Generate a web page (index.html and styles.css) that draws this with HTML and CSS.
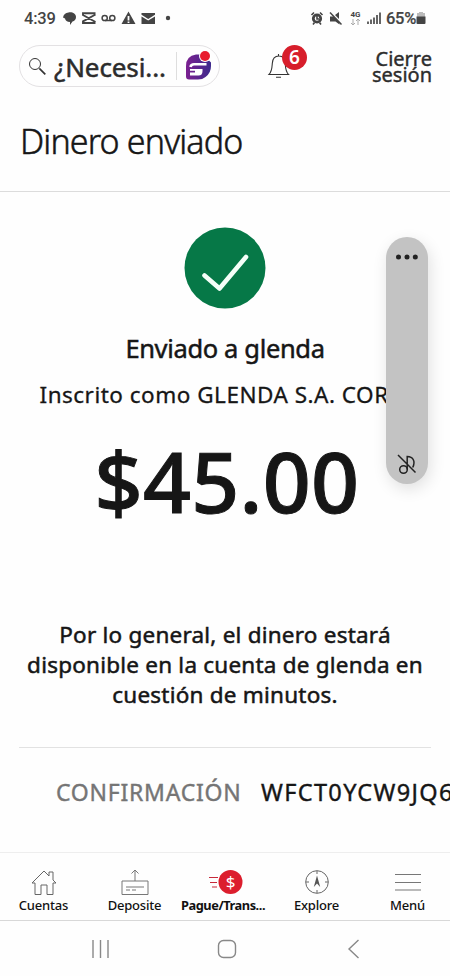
FILE: index.html
```html
<!DOCTYPE html>
<html lang="es">
<head>
<meta charset="utf-8">
<title>Dinero enviado</title>
<link rel="stylesheet" href="styles.css">
</head>
<body>
<div class="status">
  <div class="status-left">
    <span class="clock">4:39</span>
    <svg class="status-icons" width="112" height="16" viewBox="0 0 112 16">
      <g fill="#444">
        <path d="M5.500 2.500c3.500-.8 7.500 1 7.500 4.500 0 2.500-1.500 4-3.500 4.500L7 15v-3C4 12 2.500 10.500 2 8.500L0 7.500C.5 4.500 2.500 3 5.500 2.500z"/>
        <path fill-rule="evenodd" d="M65.500 1.500l7 12.500h-14zM64.600 6v4.500h1.800V6zm0 5.500v1.500h1.800v-1.500z"/>
        <path d="M78.500 3H92v1.800L85.200 9l-6.700-4.200zM78.500 6.500l6.700 4 6.800-4V14H78.500z"/>
        <circle cx="105" cy="8" r="2.200"/>
      </g>
      <g fill="none" stroke="#444">
        <path stroke-width="1.900" d="M32.500 3.300H20v1.700l12.500 7M32.500 13H20v-1.700L32.500 4.500"/>
        <path stroke-width="1.500" d="M42 10.500h7"/>
        <circle cx="41.700" cy="8" r="2.600" stroke-width="1.500"/>
        <circle cx="49.300" cy="8" r="2.600" stroke-width="1.500"/>
      </g>
    </svg>
  </div>
  <div class="status-right">
    <svg width="73" height="18" viewBox="0 0 73 18">
      <g fill="none" stroke="#444">
        <circle cx="7" cy="9.500" r="3.700" stroke-width="2.800"/>
        <path stroke-width="1.600" d="M1.500 6 4 3.500M12.500 6 10 3.500M3 15.500l1.500-2M11 15.500l-1.500-2M7 7v3h2"/>
        <path stroke-width="1.500" d="M20 3.500 31.500 15.500"/>
      </g>
      <path fill="#444" d="M20 7.500h3.500l6 6v2l-4-3H20zM25 6l4-3v7z"/>
      <text class="net" x="40.500" y="8">4G</text>
      <path fill="none" stroke="#aaa" d="M43 10v6M41 14l2 2 2-2M48 16v-6M46 12l2-2 2 2"/>
      <path fill="none" stroke="#555" stroke-width="1.800" d="M58 15v-2.500M61 15v-4.500M64 15V8.500M67 15V6M70 15V3.500"/>
    </svg>
    <span class="percent">65%</span>
    <svg width="10" height="14" viewBox="0 0 10 14"><path fill="#bbb" d="M3 1h4v1h2v5H1V2h2z"/><path fill="#444" d="M.5 5.500h9V12q0 1-1 1h-7q-1 0-1-1z"/></svg>
  </div>
</div>

<header class="top">
  <div class="search">
    <svg width="20" height="20" viewBox="0 0 20 20" fill="none" stroke="#333"><circle cx="7" cy="8" r="5.500"/><path stroke-width="1.700" d="m11.300 12.300 6 6"/></svg>
    <span class="search-text">¿Necesi...</span>
    <span class="search-rule"></span>
    <svg class="fargo" width="28" height="30" viewBox="0 0 28 30">
      <defs><linearGradient id="g" x1="0" x2="1"><stop stop-color="#7b2090"/><stop offset="1" stop-color="#3d2a8c"/></linearGradient></defs>
      <path fill="url(#g)" d="M11 3.500h7l8 8V15q0 7-5.500 11-3 2.500-7.500 2.500H4q-3 0-3-3V15Q1 5 11 3.500z"/>
      <path fill="none" stroke="#fff" stroke-width="2.600" d="M21.500 13.300H9q-3 0-3.500 2.700"/>
      <path fill="#fff" d="M5 18h12.500v2q0 4.500-4 4.500H5v-3h5v-1.700H5z"/>
      <circle cx="20" cy="5" r="6" fill="#fff"/><circle cx="20" cy="5" r="5" fill="#e81c2e"/>
    </svg>
  </div>
  <div class="bell">
    <svg width="24" height="28" viewBox="0 0 24 28" fill="none" stroke="#333"><path stroke-width="1.100" d="M1 22.500c3-3 3-7 3.300-11C4.500 6.500 7.500 4 11 4s6 2.500 6.200 7.500c.3 4 .3 8 3.300 11zM10.500 4V2M8 25.300h5"/></svg>
    <span class="badge">6</span>
  </div>
  <div class="logout">Cierre<br>sesión</div>
</header>

<div class="title"><h1>Dinero enviado</h1></div>

<main>
  <svg class="check" width="82" height="82" viewBox="0 0 82 82"><circle cx="41" cy="41" r="40.500" fill="#067847"/><path fill="none" stroke="#f4fff8" stroke-width="4.600" stroke-linecap="round" stroke-linejoin="round" d="m20.500 48.500 15 13L62 30"/></svg>
  <h2>Enviado a glenda</h2>
  <p class="alias">Inscrito como GLENDA S.A. CORP</p>
  <div class="amount">$45.00</div>
  <p class="note"><span>Por lo general, el dinero estará</span><span>disponible en la cuenta de glenda en</span><span>cuestión de minutos.</span></p>
  <div class="confirm"><span class="label">CONFIRMACIÓN</span><span class="code">WFCT0YCW9JQ6</span></div>
</main>

<nav class="tabs">
  <div class="tab"><svg width="28" height="28" viewBox="0 0 28 28" fill="none" stroke="#666"><path d="M2 15 14 3l5 5V4h4v8l3 3h-3v11.500h-6V17h-6v9.500H5V15z"/></svg><span>Cuentas</span></div>
  <div class="tab"><svg width="28" height="28" viewBox="0 0 28 28" fill="none" stroke="#777"><path d="M1 13h26v13.500H1zM14 13V2M10.500 5.500 14 2l3.500 3.500M5 19h18M5 22h4M11 22h4"/></svg><span>Deposite</span></div>
  <div class="tab active"><svg width="36" height="28" viewBox="0 0 36 28"><path stroke="#c72a3a" d="M4 9.500h9M5 14.500h7M7 19h5"/><circle cx="25.500" cy="14" r="12" fill="#dc1e2d"/><text class="dollar" x="25.500" y="20">$</text></svg><span>Pague/Trans...</span></div>
  <div class="tab"><svg width="28" height="28" viewBox="0 0 28 28" fill="none" stroke="#666"><circle cx="14" cy="14" r="11.300"/><path d="M14 3v3M14 22v3M3 14h3M22 14h3"/><path fill="#555" stroke="none" d="m14 7.500 3.200 11.500-3.200-3.500-3.200 3.500z"/></svg><span>Explore</span></div>
  <div class="tab"><svg width="28" height="28" viewBox="0 0 28 28" stroke="#777" stroke-width="1.100"><path d="M1 6.500h26M1 14.500h26M1 22h26"/></svg><span>Menú</span></div>
</nav>
<div class="system">
  <svg width="20" height="20" viewBox="0 0 20 20" stroke="#888" stroke-width="1.400"><path d="M2 1v18M9.500 1v18M17 1v18"/></svg>
  <svg width="20" height="20" viewBox="0 0 20 20" fill="none" stroke="#888" stroke-width="1.400"><rect x="1.500" y="1.500" width="17" height="17" rx="5"/></svg>
  <svg width="20" height="20" viewBox="0 0 20 20" fill="none" stroke="#888" stroke-width="1.400"><path d="M15.500 1 6 10l9.500 9"/></svg>
</div>

<div class="volume">
  <svg width="24" height="8" viewBox="0 0 24 8" fill="#222"><circle cx="3.500" cy="4" r="2.500"/><circle cx="12" cy="4" r="2.500"/><circle cx="20.300" cy="4" r="2.500"/></svg>
  <svg width="20" height="22" viewBox="0 0 20 22" fill="none" stroke="#222" stroke-width="1.500"><circle cx="6.500" cy="16.500" r="3.800"/><path d="M10.200 16.500V3.500c6 0 8.500 5 5.500 11M1 2l17.500 17.500"/></svg>
</div>
</body>
</html>
```
FILE: styles.css
```css
* { box-sizing: border-box; margin: 0; padding: 0; }
body { width: 450px; height: 976px; overflow: hidden; background: #fefefe; color: #161616; font-family: "Noto Sans", sans-serif; display: flex; flex-direction: column; position: relative; white-space: nowrap; }
svg { display: block; flex: none; overflow: visible; }

.status { height: 36px; flex: none; display: flex; justify-content: space-between; align-items: center; padding: 0 24px 0 24px; color: #444; font: 500 16.500px Roboto, sans-serif; }
.status-left, .status-right { display: flex; align-items: center; }
.clock { letter-spacing: -.2px; }
.status-icons { margin-left: 7px; }
.percent { margin: 0 1px 0 2px; letter-spacing: -.3px; -webkit-text-stroke: .2px; }
.status-right svg { margin-left: -1px; margin-right: 1px; }
.status-right svg:last-child { margin: 0 0 0 -1px; }
.net { font: 700 8px Roboto, sans-serif; fill: #444; }

.top { height: 60px; flex: none; display: flex; align-items: flex-start; padding: 9px 18px 0 19px; }
.search { width: 201px; height: 42px; border: 1.500px solid #e3e1e3; border-radius: 21px; display: flex; align-items: center; padding-left: 8px; }
.search-text { font-size: 26px; letter-spacing: -.1px; margin: 2px 0 0 6px; width: 116px; color: #2c2c2c; -webkit-text-stroke: .5px; }
.search-rule { width: 1px; height: 28px; background: #dedede; margin-left: 6px; }
.fargo { margin-left: 8px; }
.bell { position: relative; margin: 7px 0 0 48px; }
.badge { position: absolute; left: 14px; top: -7px; width: 25px; height: 25px; border-radius: 50%; background: #d71e2b; color: #fff; font-size: 19px; font-weight: 600; line-height: 25px; text-align: center; }
.logout { margin-left: auto; text-align: right; font-size: 20px; line-height: 16px; padding-top: 6px; color: #2c2c2c; -webkit-text-stroke: .4px; }

.title { height: 96px; flex: none; border-bottom: 1px solid #dcdcdc; padding: 22px 0 0 20px; }
h1 { font-size: 34px; line-height: 46px; font-weight: 300; letter-spacing: -.85px; -webkit-text-stroke: .5px; }

main { height: 660px; flex: none; display: flex; flex-direction: column; align-items: center; padding-top: 35px; }
h2 { font-size: 25.500px; line-height: 34px; font-weight: 400; letter-spacing: -.35px; margin-top: 22px; -webkit-text-stroke: .5px; }
.alias { align-self: flex-start; margin: 15px 0 0 39.500px; font-size: 22.500px; line-height: 30px; letter-spacing: .5px; -webkit-text-stroke: .3px; }
.amount { font-size: 84px; line-height: 100px; font-weight: 500; margin: 21px 0 0 4px; letter-spacing: .3px; -webkit-text-stroke: 1px; }
.note { margin-top: 89px; width: 412px; height: 128px; border-bottom: 1.500px solid #e2e2e2; font-size: 22.500px; line-height: 30px; letter-spacing: .22px; -webkit-text-stroke: .5px; display: flex; flex-direction: column; align-items: center; }
.confirm { align-self: flex-start; display: flex; margin: 29px 0 0 56px; font-size: 23px; line-height: 30px; -webkit-text-stroke: .4px; }
.label { color: #757575; width: 205px; letter-spacing: .75px; }
.code { font-size: 23.500px; letter-spacing: 1.350px; }

.tabs { height: 69px; flex: none; border-top: 1px solid #eee; border-bottom: 1.500px solid #d8d8d8; display: grid; grid-template-columns: 87px 95px 82px 105px 77px; padding-top: 15px; }
.tab { display: flex; flex-direction: column; align-items: center; font-size: 13px; font-weight: 500; line-height: 18px; color: #111; letter-spacing: -.2px; }
.active { font-size: 12.800px; font-weight: 700; letter-spacing: -.45px; }
.dollar { fill: #fff; font-size: 17px; font-weight: 400; text-anchor: middle; letter-spacing: 0; }
.system { height: 55px; flex: none; display: grid; grid-template-columns: 202px 50px 202px; justify-items: center; align-items: center; }

.volume { position: absolute; left: 386px; top: 237px; width: 42px; height: 247px; border-radius: 21px; background: #c3c3c3; box-shadow: 2px 5px 16px rgba(0,0,0,.12); display: flex; flex-direction: column; justify-content: space-between; align-items: center; padding: 16px 0 9px; }
```
